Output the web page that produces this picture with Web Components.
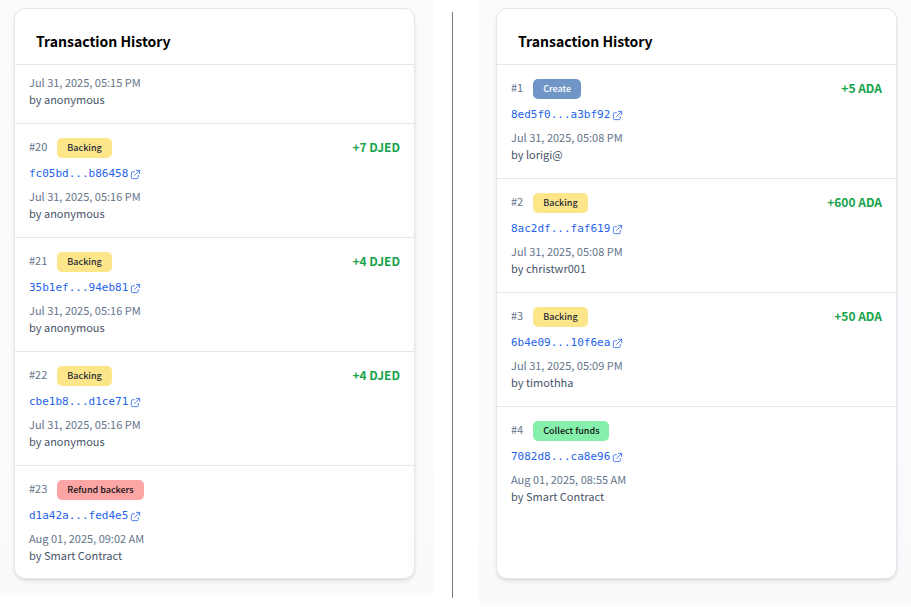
<!DOCTYPE html>
<html lang="en">
<head>
<meta charset="utf-8">
<meta name="viewport" content="width=device-width, initial-scale=1">
<title>Transaction History</title>
<style>
body { margin: 0; background: #fff; font-family: "Noto Sans CJK SC", "Noto Sans", sans-serif; }
</style>
</head>
<body>
<history-compare>
  <history-card slot="left" heading="Transaction History">
    <tx-entry date="Jul 31, 2025, 05:15 PM" author="anonymous"></tx-entry>
    <tx-entry number="20" kind="backing" label="Backing" hash="fc05bd...b86458" amount="+7 DJED" date="Jul 31, 2025, 05:16 PM" author="anonymous"></tx-entry>
    <tx-entry number="21" kind="backing" label="Backing" hash="35b1ef...94eb81" amount="+4 DJED" date="Jul 31, 2025, 05:16 PM" author="anonymous"></tx-entry>
    <tx-entry number="22" kind="backing" label="Backing" hash="cbe1b8...d1ce71" amount="+4 DJED" date="Jul 31, 2025, 05:16 PM" author="anonymous"></tx-entry>
    <tx-entry number="23" kind="refund" label="Refund backers" hash="d1a42a...fed4e5" date="Aug 01, 2025, 09:02 AM" author="Smart Contract"></tx-entry>
  </history-card>
  <history-card slot="right" heading="Transaction History">
    <tx-entry number="1" kind="create" label="Create" hash="8ed5f0...a3bf92" amount="+5 ADA" date="Jul 31, 2025, 05:08 PM" author="lorigi@"></tx-entry>
    <tx-entry number="2" kind="backing" label="Backing" hash="8ac2df...faf619" amount="+600 ADA" date="Jul 31, 2025, 05:08 PM" author="christwr001"></tx-entry>
    <tx-entry number="3" kind="backing" label="Backing" hash="6b4e09...10f6ea" amount="+50 ADA" date="Jul 31, 2025, 05:09 PM" author="timothha"></tx-entry>
    <tx-entry number="4" kind="collect" label="Collect funds" hash="7082d8...ca8e96" date="Aug 01, 2025, 08:55 AM" author="Smart Contract"></tx-entry>
  </history-card>
</history-compare>

<script>
class HistoryCompare extends HTMLElement {
  constructor() {
    super();
    this.attachShadow({ mode: "open" }).innerHTML = `
      <style>
        :host { display: grid; grid-template-columns: 433fr 46px 432fr; }
        .panel { display: flex; min-width: 0; background: linear-gradient(#fafcfc, #f9fafc); }
        .left { padding: 8px 18px 16px 14px; margin-bottom: 10px; }
        .right { padding: 8px 14px 26px 17px; }
        .rule { width: 1px; margin: 12px 19px 7px; background: #7c7c7c; }
      </style>
      <div class="panel left"><slot name="left"></slot></div>
      <div class="rule" role="separator" aria-orientation="vertical"></div>
      <div class="panel right"><slot name="right"></slot></div>`;
  }
}

class HistoryCard extends HTMLElement {
  constructor() {
    super();
    this.attachShadow({ mode: "open" }).innerHTML = `
      <style>
        :host { display: block; box-sizing: border-box; flex: 1; min-width: 0; background: #fff;
          border: 1px solid #e5e7eb; border-radius: 11px;
          box-shadow: 0 3px 5px -1px rgba(0,0,0,.1), 0 1px 3px -1px rgba(0,0,0,.1); }
        h2 { margin: 0; padding: 20px 21px 11px; font-size: 14px; line-height: 24px; font-weight: 700; color: #000; }
        ::slotted(:last-child) { padding-bottom: 14px; }
      </style>
      <h2></h2>
      <div role="list"><slot></slot></div>`;
  }
  connectedCallback() {
    this.shadowRoot.querySelector("h2").textContent = this.getAttribute("heading");
  }
}

class TxBadge extends HTMLElement {
  constructor() {
    super();
    this.attachShadow({ mode: "open" }).innerHTML = `
      <style>
        :host { display: block; padding: 0 10px; border-radius: 5px; font-size: 9px; line-height: 20px;
          font-weight: 500; color: #1f2937; background: #fde68a; }
        :host([kind="create"]) { background: #7096c8; color: #fff; }
        :host([kind="refund"]) { background: #fca5a5; color: #111; }
        :host([kind="collect"]) { background: #86efac; color: #111; }
      </style><slot></slot>`;
  }
}

class TxEntry extends HTMLElement {
  constructor() {
    super();
    this.attachShadow({ mode: "open" });
  }
  connectedCallback() {
    const get = name => this.getAttribute(name);
    this.setAttribute("role", "listitem");
    const top = get("number") ? `
      <div class="head">
        <span class="number">#${get("number")}</span>
        <tx-badge kind="${get("kind")}">${get("label")}</tx-badge>
        ${get("amount") ? `<strong>${get("amount")}</strong>` : ""}
      </div>
      <a href="#${get("hash")}">${get("hash")}<svg viewBox="0 0 24 24" aria-hidden="true">
        <path d="M10 6H5a2 2 0 0 0-2 2v11a2 2 0 0 0 2 2h11a2 2 0 0 0 2-2v-5M14 3h7m0 0v7m0-7L10 14"/></svg></a>` : "";
    this.shadowRoot.innerHTML = `
      <style>
        :host { display: block; padding: 14px 14px 15px; border-top: 1px solid #e5e7eb; font-size: 11px; line-height: 17px; }
        :host(:not([number])) { padding-top: 9px; }
        .head { display: flex; align-items: flex-start; height: 20px; }
        .number { margin-right: 10px; color: #64748b; }
        strong { margin-left: auto; font-size: 12px; font-weight: 700; color: #16a34a; }
        a { display: flex; align-items: center; gap: 2px; width: max-content; margin: 8px 0 6px;
          font-family: "DejaVu Sans Mono", monospace; font-size: 11px; line-height: 16px; color: #2563eb; text-decoration: none; }
        svg { width: 11px; height: 11px; fill: none; stroke: currentColor; stroke-width: 2;
          stroke-linecap: round; stroke-linejoin: round; opacity: .85; }
        time { display: block; color: #64748b; }
        .author { color: #475569; }
      </style>
      ${top}
      <time>${get("date")}</time>
      <div class="author">by ${get("author")}</div>`;
  }
}

customElements.define("tx-badge", TxBadge);
customElements.define("tx-entry", TxEntry);
customElements.define("history-card", HistoryCard);
customElements.define("history-compare", HistoryCompare);
</script>
</body>
</html>
